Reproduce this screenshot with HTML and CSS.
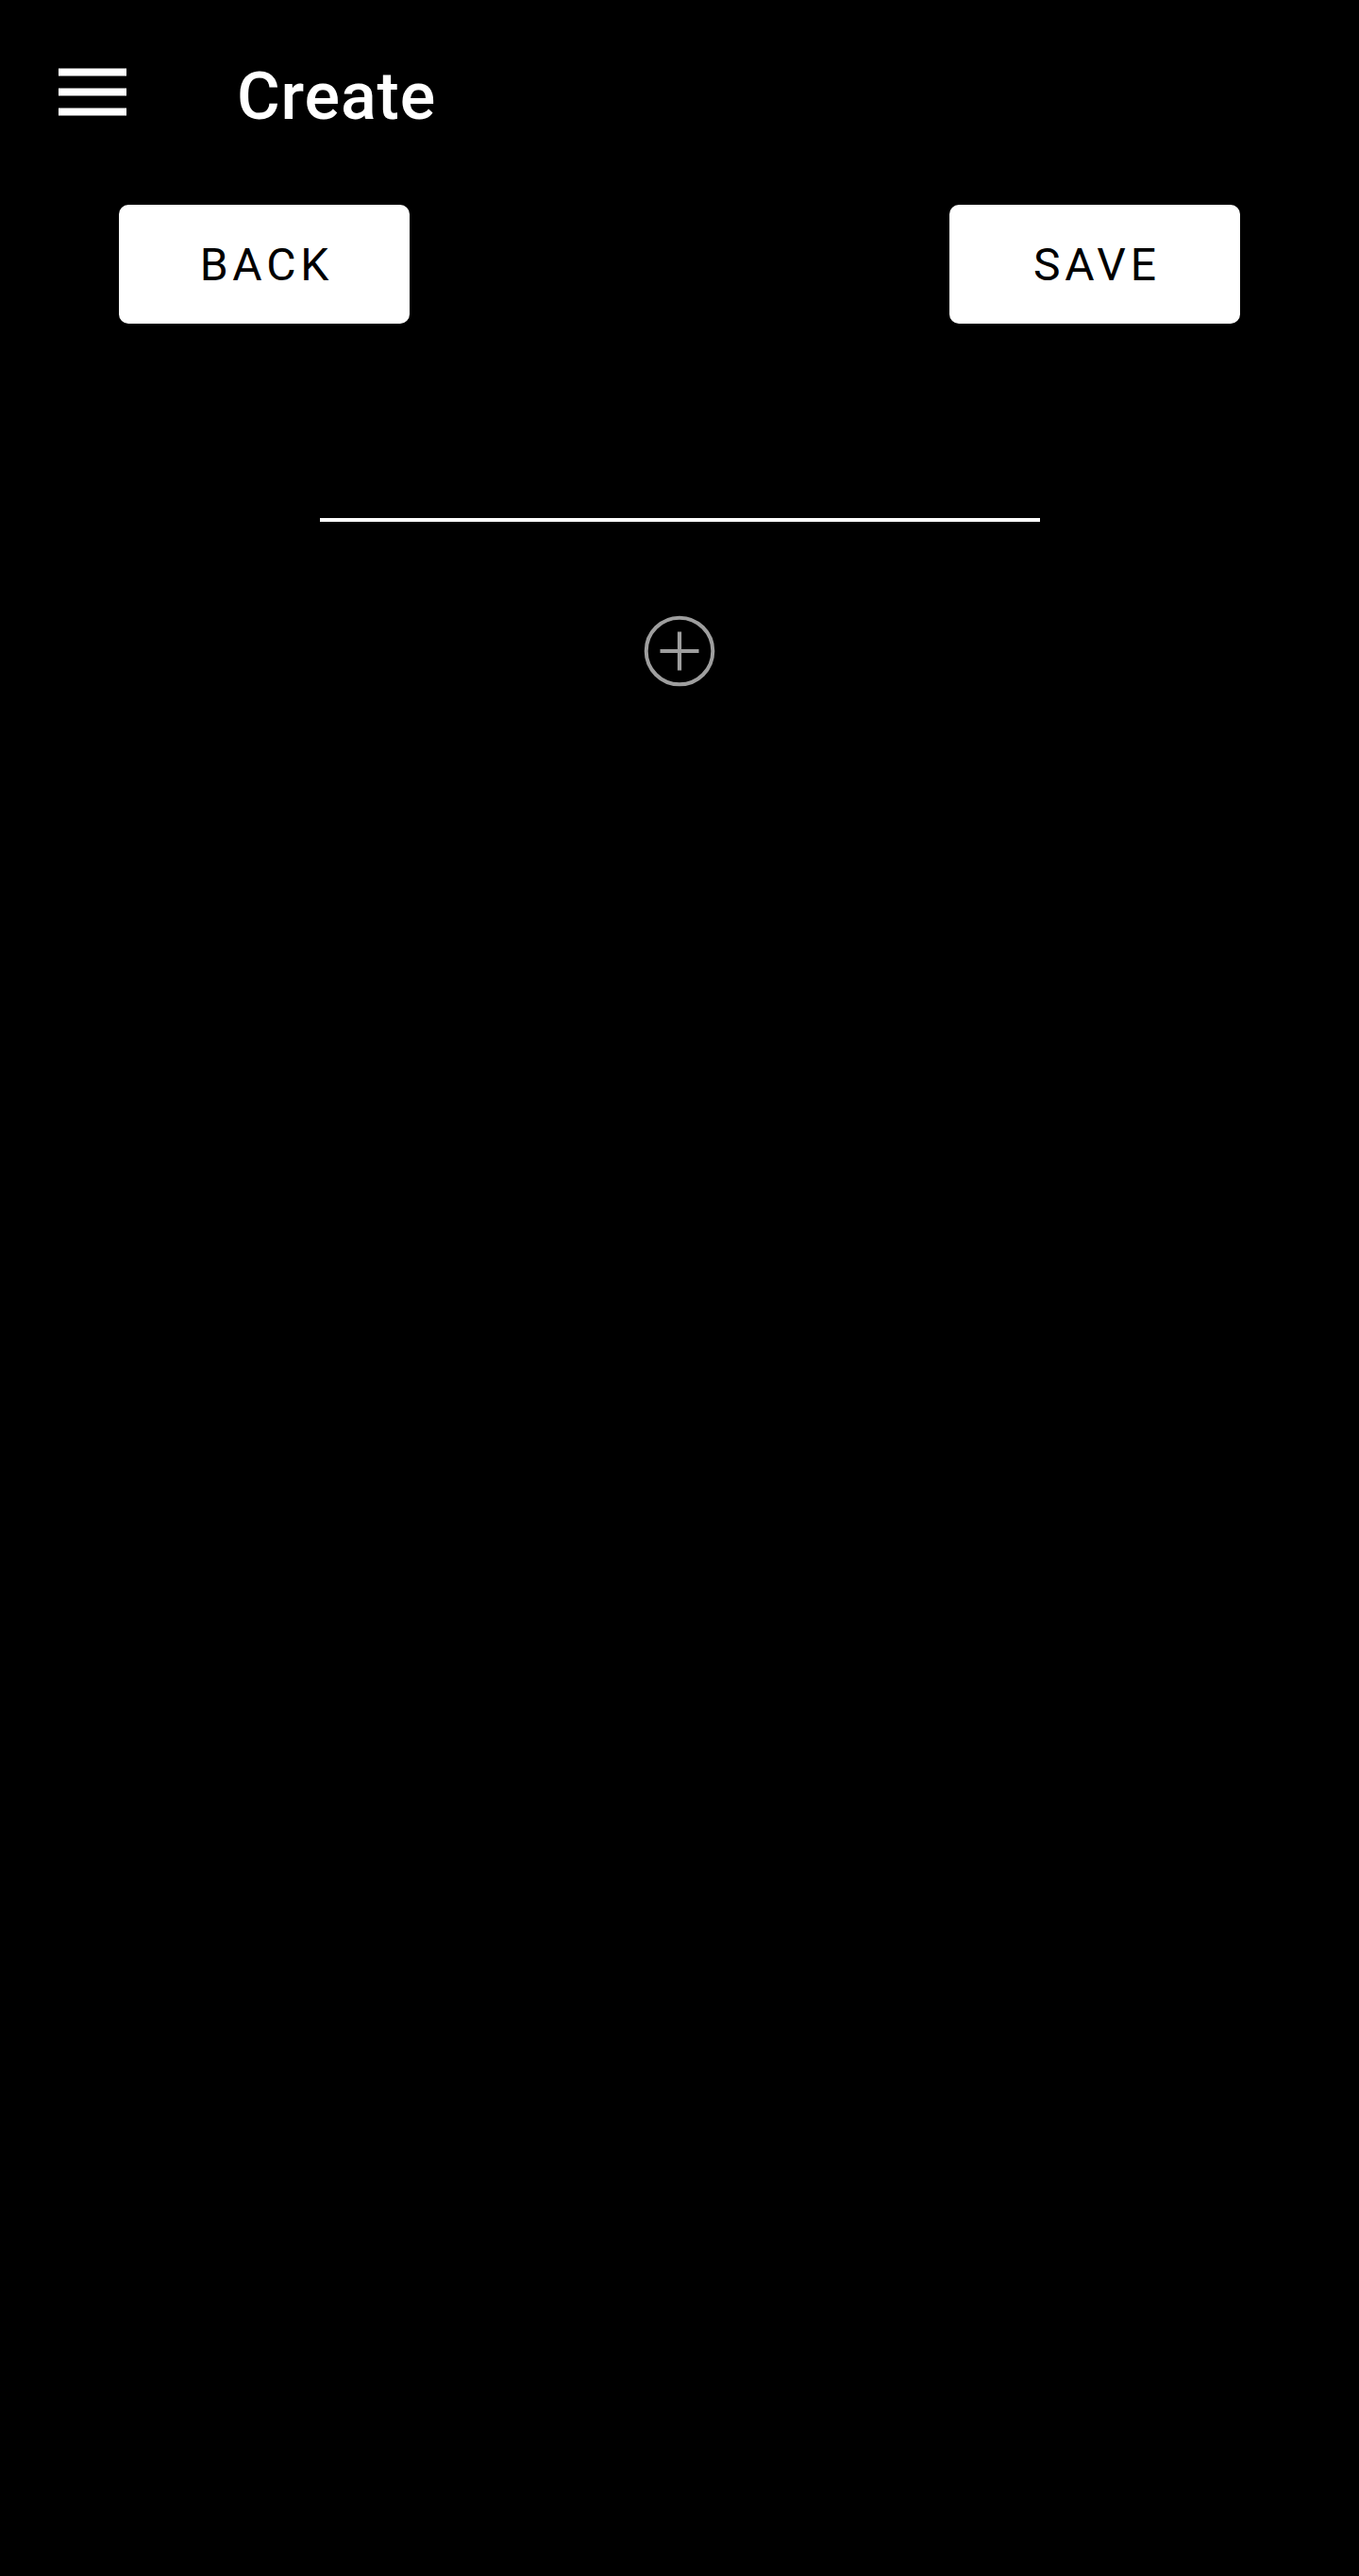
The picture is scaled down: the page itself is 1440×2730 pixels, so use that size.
FILE: index.html
```html
<!DOCTYPE html>
<html lang="en">
<head>
<meta charset="utf-8">
<title>Create</title>
<link rel="stylesheet" href="styles.css">
</head>
<body>
<header class="appbar">
  <button class="menu-btn" aria-label="Menu">
    <svg class="menu-icon" width="72" height="52" viewBox="0 0 72 52">
      <rect x="0" y="0.5" width="72" height="8" fill="#fff"/>
      <rect x="0" y="21.5" width="72" height="8" fill="#fff"/>
      <rect x="0" y="42.5" width="72" height="8" fill="#fff"/>
    </svg>
  </button>
  <h1 class="title">Create</h1>
</header>
<main class="content">
  <div class="actions">
    <button class="btn">BACK</button>
    <button class="btn">SAVE</button>
  </div>
  <div class="field">
    <input class="field-input" type="text" aria-label="Title">
  </div>
  <div class="add-row">
    <button class="add-btn" aria-label="Add">
      <svg width="80" height="80" viewBox="0 0 80 80">
        <circle cx="40" cy="40" r="35.3" fill="none" stroke="#9e9e9e" stroke-width="4"/>
        <line x1="19.5" y1="40" x2="60.5" y2="40" stroke="#9e9e9e" stroke-width="4.2"/>
        <line x1="40" y1="19.5" x2="40" y2="60.5" stroke="#9e9e9e" stroke-width="4.2"/>
      </svg>
    </button>
  </div>
</main>
</body>
</html>
```

FILE: styles.css
```css
html, body {
  margin: 0;
  padding: 0;
  background: #000;
}

body {
  width: 1440px;
  min-height: 2730px;
  font-family: Roboto, "Liberation Sans", sans-serif;
  color: #fff;
}

.appbar {
  display: flex;
  align-items: flex-start;
  padding: 67px 0 0 62px;
  height: 70px;
}

.menu-btn {
  margin: 5px 0 0 0;
  padding: 0;
  border: 0;
  background: none;
  display: block;
  line-height: 0;
}

.menu-icon {
  display: block;
}

.title {
  margin: 0 0 0 117px;
  font-size: 70px;
  line-height: 70px;
  font-weight: 500;
  letter-spacing: 0.0125em;
  color: #fff;
}

.content {
  display: flex;
  flex-direction: column;
}

.actions {
  margin-top: 80px;
  display: flex;
  justify-content: space-between;
  padding: 0 126px;
}

.btn {
  width: 308px;
  height: 126px;
  border: 0;
  border-radius: 10px;
  background: #fff;
  color: #000;
  font-family: Roboto, "Liberation Sans", sans-serif;
  font-size: 48px;
  font-weight: 400;
  letter-spacing: 0.1em;
  padding: 0 0 0 0.1em;
  cursor: pointer;
}

.field {
  display: flex;
  justify-content: center;
  margin-top: 110px;
}

.field-input {
  box-sizing: border-box;
  width: 763px;
  height: 100px;
  background: transparent;
  border: 0;
  border-bottom: 4px solid #fff;
  color: #fff;
  font-family: Roboto, "Liberation Sans", sans-serif;
  font-size: 48px;
  outline: none;
  padding: 0;
}

.add-row {
  display: flex;
  justify-content: center;
  margin-top: 97px;
}

.add-btn {
  padding: 0;
  border: 0;
  background: none;
  line-height: 0;
  display: block;
}

.add-btn svg {
  display: block;
}
```
